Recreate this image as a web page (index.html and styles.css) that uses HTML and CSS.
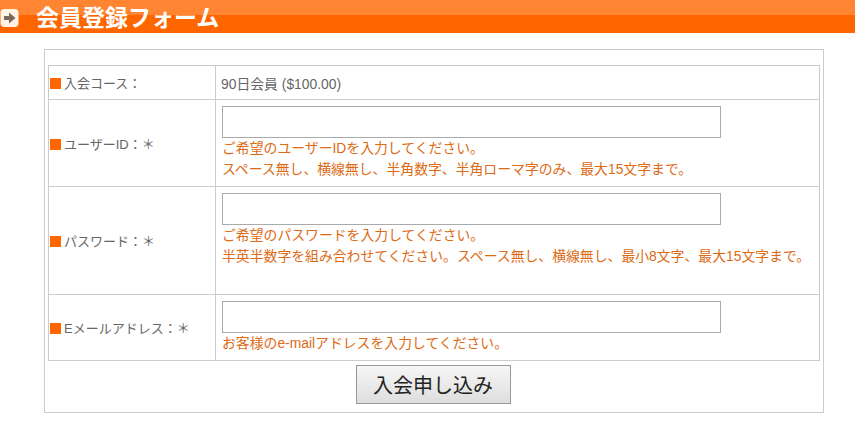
FILE: index.html
```html
<!DOCTYPE html>
<html lang="ja">
<head>
    <meta charset="UTF-8">
    <meta name="viewport" content="width=device-width, initial-scale=1.0">
    <title>会員登録フォーム</title>
    <link rel="stylesheet" href="styles.css">
</head>
<body>

    <!-- 見出し -->
    <h1 class="page-title">
        <svg class="title-icon" width="20" height="20" viewBox="0 0 20 20">
            <rect x="0.5" y="1" width="18" height="18" rx="4" fill="#fff3e6"/>
            <path d="M4 8h5V4.500L15.500 10 9 15.500V12H4z" fill="#7a6a5e"/>
        </svg>
        <span class="title-text">会員登録フォーム</span>
    </h1>

    <!-- フォーム -->
    <form class="form-box">
        <table class="form-table">
            <tr>
                <th><span class="mark"></span>入会コース：</th>
                <td class="course">90日会員 ($100.00)</td>
            </tr>
            <tr>
                <th><span class="mark"></span>ユーザーID：＊</th>
                <td>
                    <input type="text" class="field">
                    <p class="hint">ご希望のユーザーIDを入力してください。<br>スペース無し、横線無し、半角数字、半角ローマ字のみ、最大15文字まで。</p>
                </td>
            </tr>
            <tr>
                <th><span class="mark"></span>パスワード：＊</th>
                <td class="tall">
                    <input type="text" class="field">
                    <p class="hint">ご希望のパスワードを入力してください。<br>半英半数字を組み合わせてください。スペース無し、横線無し、最小8文字、最大15文字まで。</p>
                </td>
            </tr>
            <tr>
                <th><span class="mark"></span>Eメールアドレス：＊</th>
                <td>
                    <input type="text" class="field">
                    <p class="hint">お客様のe-mailアドレスを入力してください。</p>
                </td>
            </tr>
        </table>
        <div class="submit-row">
            <button type="button" class="submit">入会申し込み</button>
        </div>
    </form>

</body>
</html>
```

FILE: styles.css
```css
body {
    margin: 0;
    background-color: #fff;
    font-family: "Liberation Sans", "Noto Sans CJK JP", sans-serif;
    font-size: 13.85px;
    color: #666;
}

/* Title */
.page-title {
    display: flex;
    align-items: center;
    gap: 16px;
    height: 33px;
    margin: 0 0 16px;
    background: linear-gradient(#ff8533 0, #ff8533 15px, #ff6600 15px);
    color: #fff;
    font-size: 23px;
    font-weight: bold;
}
.title-icon {
    flex: none;
    margin-top: 2px;
}
.title-text {
    margin-top: -2px;
}

/* Form */
.form-box {
    width: 772px;
    margin-left: 44px;
    padding: 15px 3px 8px;
    border: 1px solid #ccc;
}
.form-table {
    width: 100%;
    border-collapse: collapse;
    table-layout: fixed;
}
.form-table th, .form-table td {
    border: 1px solid #ccc;
    padding: 6px;
    vertical-align: top;
}
.form-table th {
    width: 159px;
    padding: 0 6px 0 1px;
    vertical-align: middle;
    font-size: 13px;
    font-weight: normal;
    text-align: left;
    white-space: nowrap;
}
.form-table td.course {
    height: 33px;
    padding: 0 5px;
    vertical-align: middle;
}
.form-table td.tall {
    padding-bottom: 27px;
}
.mark {
    display: inline-block;
    width: 11px;
    height: 11px;
    margin-right: 3px;
    background-color: #ff6600;
    vertical-align: -1px;
}
.field {
    display: block;
    box-sizing: border-box;
    width: 499px;
    height: 32px;
    margin: 0;
    border: 1px solid #aaa;
    background-color: #fff;
}
.hint {
    margin: 0;
    color: #dd6a14;
    line-height: 21px;
}
.submit-row {
    display: flex;
    justify-content: center;
    padding: 4px 2px 0 0;
}
.submit {
    width: 155px;
    height: 39px;
    border: 1px solid #999;
    background: linear-gradient(#f6f6f6, #dedede);
    color: #222;
    font-family: inherit;
    font-size: 20px;
}
```
